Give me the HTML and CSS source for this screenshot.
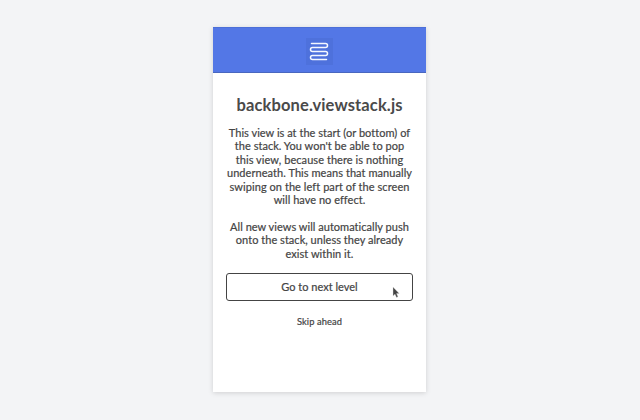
FILE: index.html
```html
<!DOCTYPE html>
<html lang="en">
<head>
<meta charset="utf-8">
<title>backbone.viewstack.js</title>
<link rel="stylesheet" href="styles.css">
</head>
<body>
<main class="phone">
  <header class="bar">
    <svg class="logo" width="27" height="27" viewBox="0 0 27 27" fill="none">
      <path d="M5.5 5.6H19.5a2 2 0 0 1 0 4H6.5a2 2 0 0 0 0 4H19.5a2 2 0 0 1 0 4H6.5a2 2 0 0 0 0 4H20.5" stroke="#f4f7ff" stroke-width="1.5" stroke-linecap="round"/>
    </svg>
  </header>
  <section class="view">
    <h1 class="title">backbone.viewstack.js</h1>
    <p class="copy">This view is at the start (or bottom) of<br>the stack. You won't be able to pop<br><span class="loose">this view, because there is nothing</span><br><span class="loose">underneath. This means that manually</span><br><span class="looser">swiping on the left part of the screen</span><br>will have no effect.</p>
    <p class="copy">All new views will automatically push<br>onto the stack, unless they already<br>exist within it.</p>
    <button class="next">Go to next level
      <svg class="cursor" width="8" height="13" viewBox="0 0 8 13"><path d="M1 1V10L3 8.2L4.5 11.5L6 10.8L4.6 7.6H7.2Z" fill="#444" stroke="#ddd" stroke-width=".4"/></svg>
    </button>
    <a class="skip">Skip ahead</a>
  </section>
</main>
</body>
</html>
```
FILE: styles.css
```css
* { box-sizing: border-box; }
body {
  margin: 0;
  height: 420px;
  padding-top: 27px;
  background: #f3f4f6;
  color: #444;
  font-family: Lato, "Open Sans", sans-serif;
}
.phone {
  width: 213px;
  height: 365px;
  margin-left: 213px;
  background: #fff;
  box-shadow: 0 1px 5px rgba(0, 0, 0, .15);
}
.bar {
  height: 46px;
  display: flex;
  justify-content: center;
  padding-top: 10px;
  background: #5377e6;
  border-top: 1px solid #4c6fd8;
  border-bottom: 1px solid #4967bf;
}
.logo { background: #4e71dc; }
.view {
  display: flex;
  flex-direction: column;
  align-items: center;
  padding: 21px 13px 0;
  text-align: center;
}
.title {
  margin: 0 0 10px;
  color: #4a4a4a;
  font-size: 16.5px;
  line-height: 22px;
  font-weight: 700;
  letter-spacing: .13px;
  white-space: nowrap;
}
.copy {
  margin: 0 0 13.4px;
  font-size: 11px;
  line-height: 13.4px;
  -webkit-text-stroke: .2px #444;
  letter-spacing: .03px;
  white-space: nowrap;
}
.loose { letter-spacing: .06px; }
.looser { letter-spacing: .06px; }
.next {
  position: relative;
  width: 187px;
  height: 28px;
  padding: 0;
  border: 1px solid #444;
  border-radius: 3px;
  background: #fff;
  color: #444;
  font: 11px/26px Lato, sans-serif;
  -webkit-text-stroke: .2px #444;
}
.cursor { position: absolute; left: 165px; top: 12px; }
.skip {
  margin-top: 14px;
  font-size: 9.3px;
  line-height: 13px;
  letter-spacing: .1px;
  -webkit-text-stroke: .2px #444;
}
```
